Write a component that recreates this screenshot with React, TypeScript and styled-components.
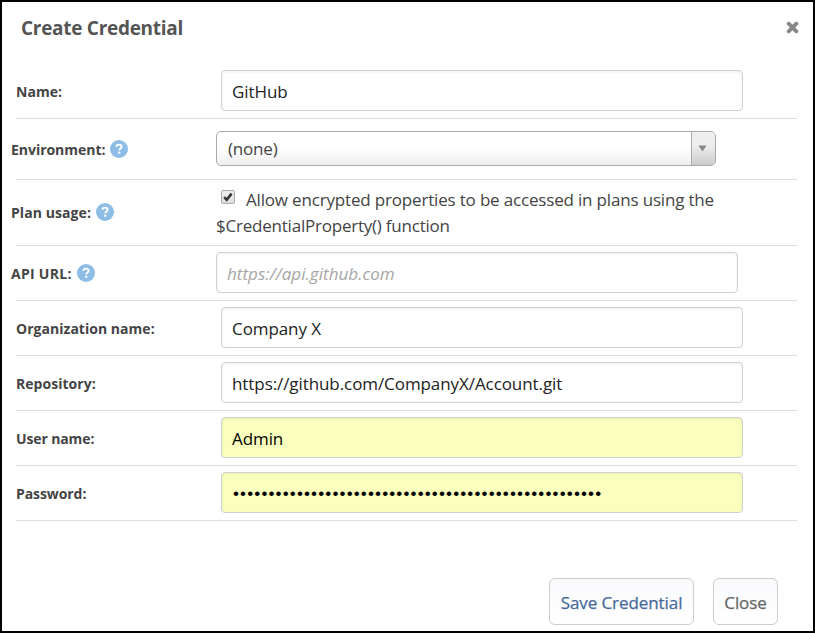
import React from "react";
import styled, { createGlobalStyle } from "styled-components";

const GlobalStyle = createGlobalStyle`
  *, *::before, *::after { box-sizing: border-box; }
  body { margin: 0; background: #fff; }
`;

const Dialog = styled.main`
  width: 815px;
  height: 633px;
  border: 2px solid #000;
  background: #fff;
  color: #444;
  font-family: "Open Sans", "Noto Sans", sans-serif;
  font-size: 17px;
  overflow: hidden;
`;

const Header = styled.header`
  display: flex;
  justify-content: space-between;
  align-items: center;
  height: 52px;
  padding: 0 14px 0 19px;
`;

const Title = styled.h1`
  margin: 0;
  font-size: 19px;
  line-height: 26px;
  font-weight: 700;
  letter-spacing: -0.29px;
  color: #555;
  white-space: nowrap;
`;

const CloseIconButton = styled.button`
  display: flex;
  padding: 0;
  margin-top: -1px;
  border: 0;
  background: none;
`;

const Form = styled.div`
  padding: 8px 16px 0 14px;
`;

const Row = styled.div<{ $height?: number; $shift?: boolean }>`
  display: flex;
  align-items: flex-start;
  height: ${(p) => p.$height ?? 55}px;
  border-bottom: 1px solid #dcdcdc;
  & > :first-child { margin-left: ${(p) => (p.$shift ? "-5px" : "0")}; }
`;

const Label = styled.div<{ $top?: number; $spacing?: number }>`
  display: flex;
  align-items: center;
  gap: 5px;
  flex: 0 0 205px;
  height: 20px;
  margin-top: ${(p) => p.$top ?? 17}px;
  font-size: 14px;
  font-weight: 700;
  letter-spacing: ${(p) => p.$spacing ?? 0.03}px;
  white-space: nowrap;
`;

const Field = styled.div<{ $filled?: boolean; $top?: number; $spacing?: number }>`
  display: flex;
  align-items: center;
  width: 522px;
  height: 41px;
  margin-top: ${(p) => p.$top ?? 6}px;
  padding: 1px 10px 0;
  border: 1px solid #cfcfd8;
  border-radius: 4px;
  background: ${(p) => (p.$filled ? "#faffbd" : "#fff")};
  box-shadow: inset 0 1px 3px rgba(0, 0, 0, 0.07);
  color: ${(p) => (p.$filled ? "#000" : "#222")};
  letter-spacing: ${(p) => p.$spacing ?? -0.08}px;
  white-space: nowrap;
`;

const Placeholder = styled.em`
  color: #a5a5a5;
  letter-spacing: 0.04px;
`;

const Mask = styled.span`
  padding: 2px 0 0 1px;
  font-family: "Liberation Sans", sans-serif;
  font-size: 17px;
  letter-spacing: 1.15px;
`;

const Select = styled.div`
  display: flex;
  width: 500px;
  height: 35px;
  margin-top: 12px;
  border: 1px solid #aaa;
  border-radius: 5px;
  background: linear-gradient(#fff 50%, #eee);
  overflow: hidden;
`;

const SelectValue = styled.span`
  flex: 1;
  padding-left: 11px;
  line-height: 34px;
  letter-spacing: -0.2px;
`;

const SelectArrow = styled.span`
  display: flex;
  align-items: center;
  width: 24px;
  padding-left: 6px;
  border-left: 1px solid #aaa;
  background: linear-gradient(#eee 40%, #ccc);
`;

const Option = styled.div`
  width: 522px;
  margin-top: 7px;
  line-height: 26px;
  white-space: nowrap;
`;

const OptionLine = styled.div<{ $spacing: number }>`
  display: flex;
  align-items: center;
  letter-spacing: ${(p) => p.$spacing}px;
`;

const CheckBox = styled.span`
  display: flex;
  align-items: center;
  justify-content: center;
  width: 14px;
  height: 14px;
  margin: -6px 11px 0 5px;
  border: 1px solid #aaa;
  border-radius: 2px;
  background: linear-gradient(#eee, #ddd);
`;

const Footer = styled.footer`
  display: flex;
  justify-content: flex-end;
  gap: 19px;
  padding: 57px 35px 0 0;
`;

const Button = styled.button<{ $width: number; $primary?: boolean }>`
  width: ${(p) => p.$width}px;
  height: 47px;
  padding: 2px 0 0;
  border: 1px solid #ccc;
  border-radius: 6px;
  background: linear-gradient(#f9fafc, #fff);
  color: ${(p) => (p.$primary ? "#456a9b" : "#666")};
  font: 500 17px "Open Sans", sans-serif;
  letter-spacing: -0.08px;
  -webkit-text-stroke: 0.25px currentColor;
  white-space: nowrap;
`;

const Help = () => (
  <svg width="18" height="18" viewBox="0 0 18 18" aria-hidden="true">
    <circle cx="9" cy="9" r="9" fill="#8dbce5" />
    <path d="M6.4 6.9C6.5 5.3 7.5 4.6 9 4.6c1.5 0 2.6.8 2.6 2.1 0 1.7-2.3 1.8-2.3 3.6" fill="none" stroke="#fff" strokeWidth="1.9" />
    <rect x="8.2" y="11.6" width="2.1" height="2.1" rx=".5" fill="#fff" />
  </svg>
);

const Cross = () => (
  <svg width="13" height="13" viewBox="0 0 13 13" aria-hidden="true">
    <path d="M2.7 2.7l7.6 7.6M10.3 2.7l-7.6 7.6" stroke="#888" strokeWidth="3.9" strokeLinecap="round" />
  </svg>
);

const Check = () => (
  <svg width="10" height="10" viewBox="0 0 10 10" aria-hidden="true">
    <path d="M1.2 5.2l2.5 2.6L8.6 1.6" fill="none" stroke="#333" strokeWidth="2.5" />
  </svg>
);

export default function App() {
  return (
    <>
      <GlobalStyle />
      <Dialog>
        <Header>
          <Title>Create Credential</Title>
          <CloseIconButton aria-label="Close dialog"><Cross /></CloseIconButton>
        </Header>
        <Form>
          <Row $height={57}>
            <Label $top={19}>Name:</Label>
            <Field $top={8}>GitHub</Field>
          </Row>
          <Row $height={61} $shift>
            <Label $top={20} $spacing={-0.03}>Environment: <Help /></Label>
            <Select>
              <SelectValue>(none)</SelectValue>
              <SelectArrow>
                <svg width="9" height="7" viewBox="0 0 9 7" aria-hidden="true">
                  <path d="M.5.5h8l-4 6z" fill="#888" />
                </svg>
              </SelectArrow>
            </Select>
          </Row>
          <Row $height={66} $shift>
            <Label $top={22} $spacing={0.08}>Plan usage: <Help /></Label>
            <Option>
              <OptionLine $spacing={-0.175}>
                <CheckBox><Check /></CheckBox>
                Allow encrypted properties to be accessed in plans using the
              </OptionLine>
              <OptionLine $spacing={-0.22}>$CredentialProperty() function</OptionLine>
            </Option>
          </Row>
          <Row $shift>
            <Label $spacing={0.28}>API URL: <Help /></Label>
            <Field><Placeholder>https://api.github.com</Placeholder></Field>
          </Row>
          <Row>
            <Label>Organization name:</Label>
            <Field>Company X</Field>
          </Row>
          <Row>
            <Label>Repository:</Label>
            <Field>https://github.com/CompanyX/Account.git</Field>
          </Row>
          <Row>
            <Label $spacing={-0.12}>User name:</Label>
            <Field $filled>Admin</Field>
          </Row>
          <Row>
            <Label $spacing={-0.08}>Password:</Label>
            <Field $filled><Mask>{"•".repeat(52)}</Mask></Field>
          </Row>
        </Form>
        <Footer>
          <Button $width={145} $primary>Save Credential</Button>
          <Button $width={65}>Close</Button>
        </Footer>
      </Dialog>
    </>
  );
}
